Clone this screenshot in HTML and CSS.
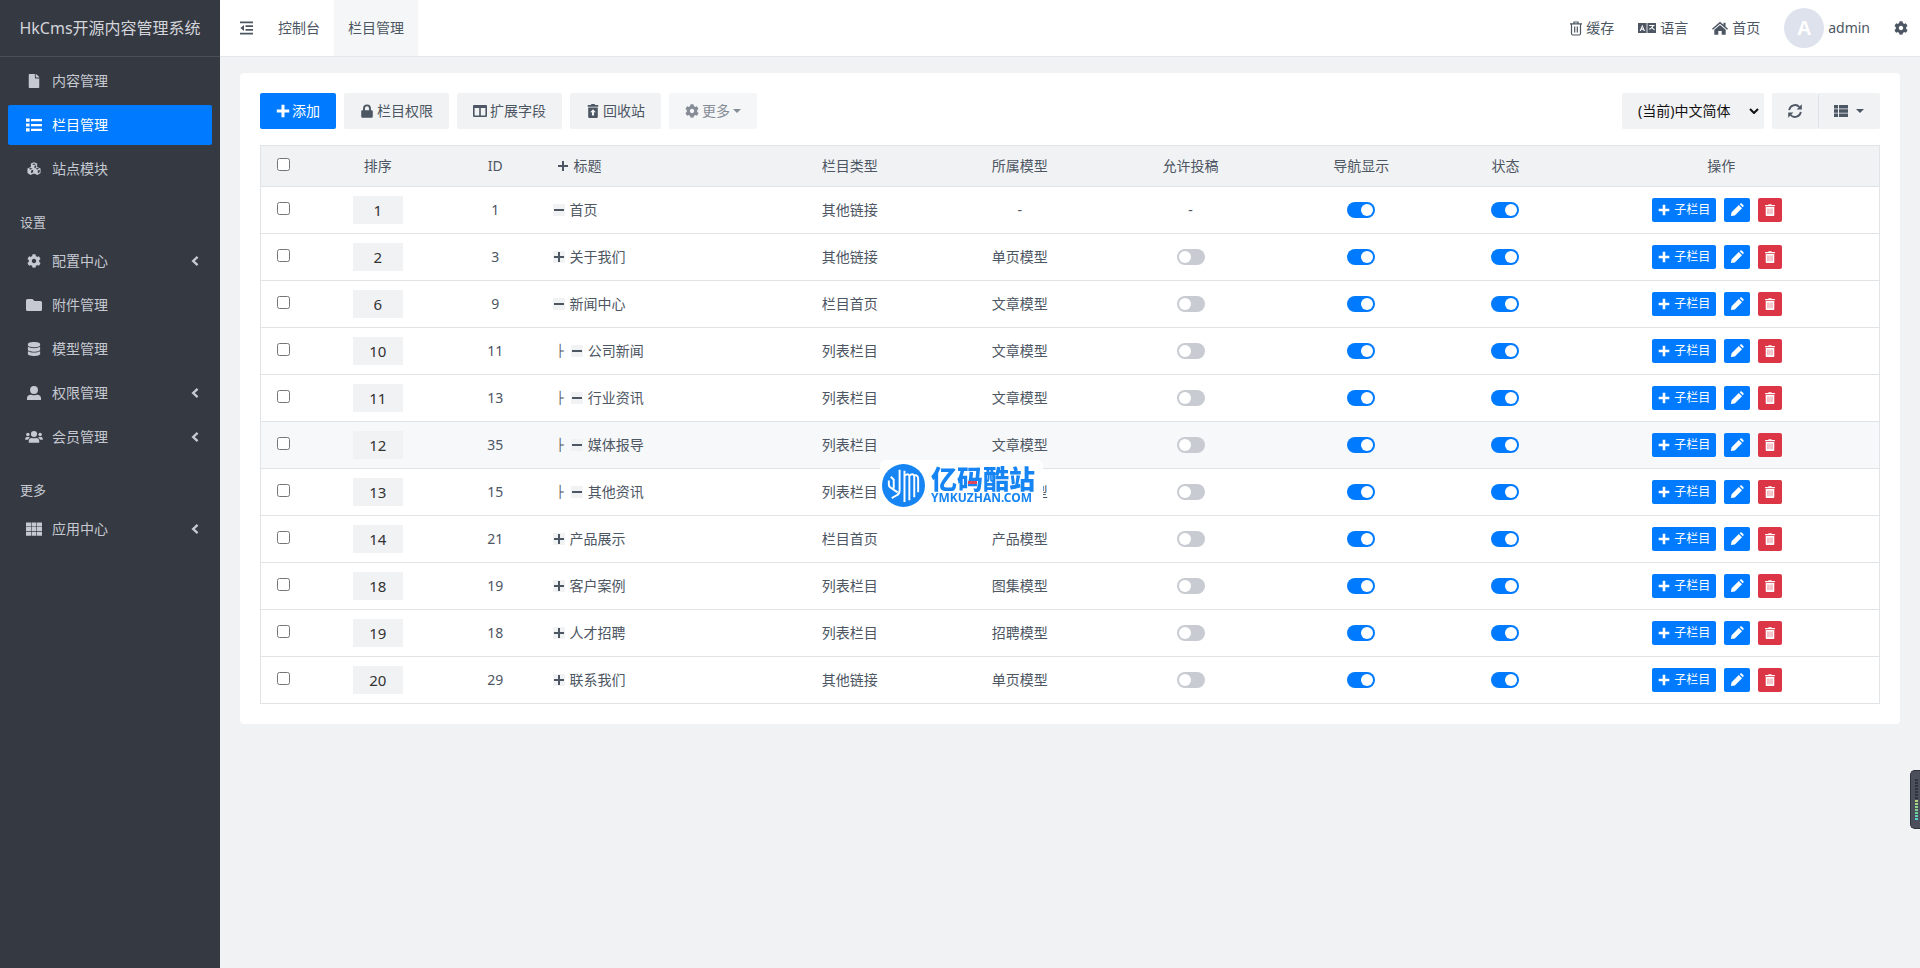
FILE: index.html
```html
<!DOCTYPE html>
<html lang="zh-CN">
<head>
<meta charset="utf-8">
<title>HkCms开源内容管理系统</title>
<link rel="stylesheet" href="styles.css">
</head>
<body>
<svg class="sprite" aria-hidden="true">
  <symbol id="file" viewBox="0 0 384 512"><path d="M224 136V0H24C10.700 0 0 10.700 0 24v464c0 13.300 10.700 24 24 24h336c13.300 0 24-10.700 24-24V160H248c-13.200 0-24-10.800-24-24zm160-14.100v6.100H256V0h6.100c6.400 0 12.500 2.500 17 7l97.900 98c4.500 4.500 7 10.600 7 16.900z"/></symbol>
  <symbol id="list" viewBox="0 0 16 14"><path d="M0 .5h3.600v3.200H0zM5 1h11v2.300H5zM0 5.400h3.600v3.200H0zM5 5.900h11v2.300H5zM0 10.300h3.600v3.200H0zM5 10.800h11v2.300H5z"/></symbol>
  <symbol id="cubes" viewBox="0 0 16 16"><path fill-rule="evenodd" d="M8 .3l3.600 1.400v4l3.900 1.600v5.300L12 14.800 8 13l-4 1.800L.5 12.600V7.300l3.900-1.600v-4zM8 1.600L5.800 2.500 8 3.400l2.200-.9zM8.500 4.500v2.600l2-.9V3.700zM4.200 6.900L2 7.800l2.200.9 2.200-.9zm.5 2.900v3l2.300-1V8.800zm7.100-2.900l-2.200.9 2.200.9 2.200-.9zm.5 2.900v3l2.200-1.200V8.900z"/></symbol>
  <symbol id="gear" viewBox="0 0 512 512"><path d="M487.400 315.700l-42.600-24.600c4.300-23.200 4.300-47 0-70.200l42.600-24.600c4.900-2.800 7.100-8.600 5.500-14-11.100-35.600-30-67.800-54.700-94.600-3.800-4.100-10-5.100-14.800-2.300L380.800 110c-17.900-15.400-38.500-27.300-60.800-35.100V25.800c0-5.600-3.900-10.500-9.400-11.700-36.700-8.200-74.300-7.800-109.200 0-5.500 1.200-9.400 6.100-9.400 11.700V75c-22.200 7.900-42.800 19.800-60.800 35.100L88.700 85.500c-4.900-2.800-11-1.900-14.800 2.300-24.700 26.700-43.600 58.900-54.700 94.600-1.700 5.400.6 11.200 5.500 14L67.300 221c-4.300 23.200-4.300 47 0 70.200l-42.600 24.600c-4.900 2.800-7.100 8.600-5.500 14 11.100 35.600 30 67.800 54.700 94.600 3.800 4.100 10 5.100 14.800 2.300l42.600-24.600c17.900 15.400 38.500 27.300 60.800 35.100v49.200c0 5.600 3.900 10.500 9.400 11.700 36.700 8.200 74.300 7.800 109.200 0 5.500-1.200 9.400-6.100 9.400-11.700v-49.200c22.200-7.900 42.800-19.800 60.800-35.100l42.600 24.600c4.900 2.800 11 1.900 14.800-2.300 24.700-26.700 43.600-58.900 54.700-94.600 1.500-5.500-.7-11.300-5.600-14.100zM256 336c-44.100 0-80-35.900-80-80s35.900-80 80-80 80 35.900 80 80-35.900 80-80 80z"/></symbol>
  <symbol id="folder" viewBox="0 0 16 12"><path d="M1.500 0h5l2 2h6A1.500 1.500 0 0 1 16 3.500v7a1.500 1.500 0 0 1-1.500 1.500h-13A1.500 1.500 0 0 1 0 10.500v-9A1.500 1.500 0 0 1 1.500 0z"/></symbol>
  <symbol id="database" viewBox="0 0 448 512"><path d="M448 73.143v45.714C448 159.143 347.667 192 224 192S0 159.143 0 118.857V73.143C0 32.857 100.333 0 224 0s224 32.857 224 73.143zM448 176v102.857C448 319.143 347.667 352 224 352S0 319.143 0 278.857V176c48.125 33.143 136.208 48.572 224 48.572S399.874 209.143 448 176zm0 160v102.857C448 479.143 347.667 512 224 512S0 479.143 0 438.857V336c48.125 33.143 136.208 48.572 224 48.572S399.874 369.143 448 336z"/></symbol>
  <symbol id="user" viewBox="0 0 16 16"><circle cx="8" cy="4.500" r="4.500"/><path d="M0 16v-2.200c0-2.300 1.900-3.800 4.200-3.800 1 0 1.800.6 3.800.6s2.800-.6 3.800-.6c2.300 0 4.200 1.500 4.200 3.800V16z"/></symbol>
  <symbol id="users" viewBox="0 0 20 16"><circle cx="10" cy="4.500" r="3.500"/><circle cx="3" cy="5" r="2"/><circle cx="17" cy="5" r="2"/><path d="M4 14.500v-2C4 10.300 5.500 9 7.400 9c.6 0 1.300.5 2.600.5s2-.5 2.600-.5c1.900 0 3.400 1.300 3.400 3.500v2zM0 11V9.700C0 8.700.9 8 2 8h2c.6 0 1 .2 1.400.6C4.200 9.200 3.500 10 3.200 11zM20 11V9.700c0-1-.9-1.700-2-1.700h-2c-.6 0-1 .2-1.400.6 1.200.6 1.900 1.400 2.200 2.400z"/></symbol>
  <symbol id="grid" viewBox="0 0 16 14"><path d="M0 .5h5v4H0zM5.600.5h4.800v4H5.600zM11 .5h5v4h-5zM0 5.100h5v4H0zM5.600 5.100h4.800v4H5.600zM11 5.100h5v4h-5zM0 9.700h5v4H0zM5.600 9.700h4.800v4H5.600zM11 9.700h5v4h-5z"/></symbol>
  <symbol id="left" viewBox="0 0 10 12"><path d="M7.600 1.800L3.200 6l4.400 4.200" fill="none" stroke="currentColor" stroke-width="2.400"/></symbol>
  <symbol id="outdent" viewBox="0 0 14 14"><path d="M0 .5h13v1.800H0zM5.500 4.200H13V6H5.500zM5.500 8H13v1.800H5.500zM0 11.700h13v1.800H0zM4 4v6L.4 7z"/></symbol>
  <symbol id="plus" viewBox="0 0 14 14"><path d="M5.500.8h3v4.700h4.700v3H8.500v4.700h-3V8.500H.8v-3h4.700z"/></symbol>
  <symbol id="expand" viewBox="0 0 12 12"><path d="M5 1h2v4h4v2H7v4H5V7H1V5h4z"/></symbol>
  <symbol id="collapse" viewBox="0 0 12 12"><path d="M1 5h10v2H1z"/></symbol>
  <symbol id="lock" viewBox="0 0 14 16"><path fill-rule="evenodd" d="M2.500 7V5a4.500 4.500 0 0 1 9 0v2h.7c.8 0 1.400.6 1.400 1.400v5.900c0 .8-.6 1.400-1.400 1.400H1.800c-.8 0-1.400-.6-1.400-1.400V8.400C.4 7.600 1 7 1.800 7zM4.700 7h4.600V5a2.300 2.300 0 0 0-4.600 0z"/></symbol>
  <symbol id="columns" viewBox="0 0 14 14"><path fill-rule="evenodd" d="M1 1h12a1 1 0 0 1 1 1v10a1 1 0 0 1-1 1H1a1 1 0 0 1-1-1V2a1 1 0 0 1 1-1zM1.600 4v7.400h4.600V4zM7.800 4v7.400h4.600V4z"/></symbol>
  <symbol id="recycle" viewBox="0 0 14 16"><path fill-rule="evenodd" d="M1 1h3.500l.8-1h3.400l.8 1H13v2H1zM1.500 4h11v10.500c0 .9-.6 1.500-1.500 1.500H3c-.9 0-1.500-.6-1.500-1.500zM7 6L3.800 9.400h2v3.600h2.400V9.400h2z"/></symbol>
  <symbol id="trash" viewBox="0 0 12 14"><path fill-rule="evenodd" d="M.3 1.200h3.500L4.400.2h3.200l.6 1h3.500v1.500H.3zM1 3.500h10v9.200c0 .7-.5 1.200-1.200 1.200H2.200c-.7 0-1.200-.5-1.200-1.200zM3.300 5.300v6.700h.7V5.300zM5.700 5.300v6.700h.6V5.300zM8 5.300v6.700h.7V5.300z"/></symbol>
  <symbol id="bin" viewBox="0 0 12 15"><path d="M0 2.800h12M4 2.500V1h4v1.500M1.500 3v9.500c0 1 .6 1.500 1.400 1.500h6.200c.8 0 1.400-.5 1.400-1.500V3M4.700 5.500v6M7.300 5.500v6" fill="none" stroke="currentColor" stroke-width="1.200"/></symbol>
  <symbol id="lang" viewBox="0 0 18 10"><path fill-rule="evenodd" d="M0 0h8.600v10H0zM4.300 1.800L1.600 8h1.200l.5-1.300h2L5.800 8H7zM4.300 3.900l.6 1.700H3.700z"/><path fill-rule="evenodd" d="M9.400 0H18v10H9.400zM11.200 2v1.100h3.100C13.900 4.300 12.800 5.200 11 5.700l.5 1c1-.3 1.800-.8 2.400-1.400.6.700 1.400 1.400 2.300 1.900l.6-1c-.9-.4-1.600-.9-2.100-1.600.4-.5.600-1 .8-1.500h1V2z"/></symbol>
  <symbol id="home" viewBox="0 0 16 14"><path d="M8 .8l3.500 3V1.700h2v3.900L16 7.700l-.9 1.100L8 2.800.9 8.800 0 7.700z"/><path d="M8 4l5.700 4.800v4.400c0 .3-.2.600-.6.600H9.700V9.900H6.300v3.900H2.900c-.4 0-.6-.3-.6-.6V8.800z"/></symbol>
  <symbol id="refresh" viewBox="0 0 14 14"><path d="M1.200 6.200A5.900 5.900 0 0 1 11.400 3M12.800 7.800A5.900 5.900 0 0 1 2.600 11" fill="none" stroke="currentColor" stroke-width="1.800"/><path d="M13.800.3v5.200H8.600zM.2 13.700V8.500h5.200z"/></symbol>
  <symbol id="thlist" viewBox="0 0 14 12"><path d="M0 0h4v3.400H0zM5 0h9v3.400H5zM0 4.300h4v3.400H0zM5 4.300h9v3.400H5zM0 8.600h4V12H0zM5 8.600h9V12H5z"/></symbol>
  <symbol id="pencil" viewBox="0 0 14 14"><path d="M8.800 2l3.200 3.200-7.200 7.200-3.900.7.700-3.900zM9.700 1.200l.6-.5c.5-.5 1.100-.5 1.600 0l1.400 1.400c.5.500.5 1.100 0 1.600l-.5.600z"/></symbol>
</svg>

<aside class="sidebar">
  <h1 class="brand">HkCms开源内容管理系统</h1>
  <nav class="menu">
    <a class="item" href="#"><svg class="icon"><use href="#file"/></svg>内容管理</a>
    <a class="item active" href="#"><svg class="icon"><use href="#list"/></svg>栏目管理</a>
    <a class="item" href="#"><svg class="icon"><use href="#cubes"/></svg>站点模块</a>
    <h2 class="group">设置</h2>
    <a class="item" href="#"><svg class="icon"><use href="#gear"/></svg>配置中心<svg class="arrow"><use href="#left"/></svg></a>
    <a class="item" href="#"><svg class="icon"><use href="#folder"/></svg>附件管理</a>
    <a class="item" href="#"><svg class="icon"><use href="#database"/></svg>模型管理</a>
    <a class="item" href="#"><svg class="icon"><use href="#user"/></svg>权限管理<svg class="arrow"><use href="#left"/></svg></a>
    <a class="item" href="#"><svg class="icon wide"><use href="#users"/></svg>会员管理<svg class="arrow"><use href="#left"/></svg></a>
    <h2 class="group">更多</h2>
    <a class="item" href="#"><svg class="icon"><use href="#grid"/></svg>应用中心<svg class="arrow"><use href="#left"/></svg></a>
  </nav>
</aside>

<div class="page">
  <header class="topbar">
    <button class="fold" type="button" aria-label="折叠菜单"><svg class="i14"><use href="#outdent"/></svg></button>
    <a class="tab" href="#">控制台</a>
    <a class="tab current" href="#">栏目管理</a>
    <div class="tools">
      <a class="tool" href="#"><svg class="i-bin"><use href="#bin"/></svg>缓存</a>
      <a class="tool" href="#"><svg class="i-lang"><use href="#lang"/></svg>语言</a>
      <a class="tool" href="#"><svg class="i-home"><use href="#home"/></svg>首页</a>
      <a class="tool account" href="#"><span class="avatar">A</span>admin</a>
      <button class="fold" type="button" aria-label="设置"><svg class="i14"><use href="#gear"/></svg></button>
    </div>
  </header>

  <main class="card">
    <div class="toolbar">
      <button class="btn primary" type="button"><svg class="i14"><use href="#plus"/></svg>添加</button>
      <button class="btn" type="button"><svg class="i14"><use href="#lock"/></svg>栏目权限</button>
      <button class="btn" type="button"><svg class="i14"><use href="#columns"/></svg>扩展字段</button>
      <button class="btn" type="button"><svg class="i14"><use href="#recycle"/></svg>回收站</button>
      <button class="btn muted" type="button" disabled><svg class="i14"><use href="#gear"/></svg>更多<span class="caret"></span></button>
      <div class="lang-box">
        <select class="lang" aria-label="语言"><option>(当前)中文简体</option></select>
        <svg class="chevron" viewBox="0 0 10 6"><path d="M1 1l4 4 4-4" fill="none" stroke="currentColor" stroke-width="2"/></svg>
      </div>
      <div class="btn-group">
        <button class="btn" type="button" aria-label="刷新"><svg class="i14"><use href="#refresh"/></svg></button>
        <button class="btn cols" type="button" aria-label="列"><svg class="i14"><use href="#thlist"/></svg><span class="caret"></span></button>
      </div>
    </div>

    <table class="grid">
      <colgroup><col class="c-check"><col class="c-sort"><col class="c-id"><col class="c-title"><col class="c-type"><col class="c-model"><col class="c-post"><col class="c-nav"><col class="c-state"><col class="c-ops"></colgroup>
      <thead>
        <tr><th><input class="check" type="checkbox" aria-label="全选"></th><th>排序</th><th>ID</th><th class="title"><span class="node head"><svg class="i12"><use href="#expand"/></svg>标题</span></th><th>栏目类型</th><th>所属模型</th><th>允许投稿</th><th>导航显示</th><th>状态</th><th>操作</th></tr>
      </thead>
      <tbody id="rows"></tbody>
    </table>
  </main>
</div>

<div class="watermark">
  <svg class="mark" viewBox="0 0 44 44"><circle cx="22" cy="22" r="22" fill="#1685f3"/><path d="M7 17v4c0 2 1 3 3 4l6 4M9 13l3 3v9M18 6v21c0 3-1 4-3 5l-5 3M23 39V7M28 37V12M33 34V12M23 12c3-2 4-2 5 0c2-2 4-2 5 0c2-1 4 0 4 3v14" fill="none" stroke="#fff" stroke-width="2"/></svg>
  <div class="words"><span class="name">亿码酷站</span><span class="site">YMKUZHAN.COM</span></div>
</div>
<div class="meter"><span class="bars"></span></div>
<script src="rows.js"></script>
</body>
</html>
```
FILE: styles.css
```css
* { box-sizing: border-box; }
body {
  margin: 0;
  min-height: 100vh;
  display: flex;
  background: #f1f2f4;
  color: #4d5663;
  font: 14px/20px "Noto Sans", "Noto Sans CJK SC", sans-serif;
}
a { color: inherit; text-decoration: none; }
button, select, input { font: inherit; color: inherit; }
button { border: 0; background: none; padding: 0; cursor: pointer; }
svg { flex: none; fill: currentColor; }
.sprite { position: absolute; width: 0; height: 0; }
.i14 { width: 14px; height: 14px; }
.i12 { width: 12px; height: 12px; }

.sidebar { width: 220px; flex: none; background: #353942; color: #c6c9d1; }
.brand {
  margin: 0;
  height: 57px;
  border-bottom: 1px solid #4b4f59;
  display: flex;
  align-items: center;
  justify-content: center;
  font-size: 16px;
  font-weight: 400;
  white-space: nowrap;
  color: #d3d5da;
}
.menu { padding: 4px 8px; display: flex; flex-direction: column; gap: 4px; }
.item { height: 40px; padding: 0 12px 0 18px; display: flex; align-items: center; gap: 10px; border-radius: 2px; }
.item.active { background: #007bff; color: #fff; }
.icon { width: 16px; height: 14px; }
.icon.wide { width: 18px; height: 14px; margin: 0 -1px; }
.arrow { width: 10px; height: 12px; margin-left: auto; }
.group { margin: 0; padding: 19px 12px 5px; font-size: 13px; line-height: 20px; font-weight: 400; }

.page { flex: 1; min-width: 0; }
.topbar {
  height: 57px;
  padding: 0 12px 0 20px;
  display: flex;
  align-items: stretch;
  background: #fff;
  border-bottom: 1px solid #e4e6e9;
}
.fold { display: flex; align-items: center; }
.tab { padding: 0 14px; display: flex; align-items: center; }
.fold + .tab { margin-left: 10px; }
.tab.current { background: #f5f6f8; }
.tools { margin-left: auto; display: flex; align-items: center; gap: 24px; }
.tool { display: flex; align-items: center; gap: 4px; }
.i-bin { width: 12px; height: 15px; }
.i-lang { width: 18px; height: 10px; }
.i-home { width: 16px; height: 14px; }
.avatar {
  width: 40px;
  height: 40px;
  border-radius: 50%;
  background: #dee2ec;
  color: #fff;
  display: grid;
  place-items: center;
  font: 700 20px/20px "Liberation Sans", sans-serif;
}

.card { margin: 16px 20px; padding: 20px; background: #fff; border-radius: 4px; }
.toolbar { display: flex; gap: 8px; margin-bottom: 16px; }
.btn {
  height: 36px;
  padding: 0 16px;
  display: flex;
  align-items: center;
  gap: 3px;
  background: #f1f2f4;
  border-radius: 2px;
  white-space: nowrap;
}
.btn.primary { background: #007bff; color: #fff; gap: 2px; }
.btn.muted { background: #f5f6f8; color: #868c96; }
.caret { border: 4px solid transparent; border-top-color: currentColor; border-bottom: 0; }
.lang-box { margin-left: auto; display: grid; align-items: center; }
.lang-box > * { grid-area: 1 / 1; }
.lang {
  appearance: none;
  width: 142px;
  height: 36px;
  padding: 0 16px;
  border: 0;
  border-radius: 2px;
  background: #f1f2f4;
  color: #111;
}
.chevron { width: 10px; height: 6px; justify-self: end; margin-right: 5px; color: #111; }
.btn-group { display: flex; }
.btn-group .cols { gap: 8px; border-left: 1px solid #e0e3e6; padding-left: 15px; }

.grid {
  width: 100%;
  table-layout: fixed;
  border-collapse: collapse;
  border: 1px solid #e1e4e7;
}
.c-check { width: 2.8%; }
.c-sort { width: 8.9%; }
.c-id { width: 5.6%; }
.c-title { width: 13.9%; }
.c-type { width: 10.4%; }
.c-model { width: 10.6%; }
.c-post { width: 10.5%; }
.c-nav { width: 10.6%; }
.c-state { width: 7.2%; }
.c-ops { width: 19.5%; }
.grid th, .grid td {
  padding: 0 8px;
  text-align: center;
  font-weight: 400;
  border-bottom: 1px solid #e1e4e7;
  vertical-align: middle;
}
.grid th { height: 41px; background: #f1f2f4; }
.grid td { height: 47px; }
.grid .title { text-align: left; }
.hover td { background: #f7f8fa; }
.check { width: 13px; height: 13px; margin: 0 auto 4px; display: block; }
.sort {
  width: 50px;
  height: 28px;
  border: 0;
  padding: 0;
  background: #f1f2f4;
  color: #333;
  text-align: center;
  font-size: 15px;
  display: block;
  margin: 0 auto;
}
.node { display: flex; align-items: center; gap: 5px; padding-left: 4px; }
.node.head { padding-left: 8px; }
.node .i12 { background: #f1f2f4; }
.branch { margin-left: 4px; margin-right: 2px; font: 12px/20px "DejaVu Sans Mono", monospace; }
.switch {
  appearance: none;
  width: 28px;
  height: 16px;
  margin: 0 auto;
  padding: 2px;
  display: flex;
  border-radius: 8px;
  background: #c8cbd2;
}
.switch::before { content: ""; width: 12px; height: 12px; border-radius: 50%; background: #fff; }
.switch:checked { background: #007bff; justify-content: flex-end; }
.ops { display: flex; justify-content: center; gap: 8px; padding-right: 8px; }
.small {
  height: 24px;
  padding: 0 6px;
  display: flex;
  align-items: center;
  gap: 4px;
  border-radius: 2px;
  background: #007bff;
  color: #fff;
  font-size: 12px;
  white-space: nowrap;
}
.small.danger { background: #dc3545; }

.watermark {
  position: fixed;
  left: 880px;
  top: 460px;
  height: 50px;
  padding: 0 8px 0 2px;
  display: flex;
  align-items: center;
  gap: 6px;
  background: #fff;
  border-radius: 6px;
  color: #1685f3;
}
.mark { width: 43px; height: 43px; }
.words { display: flex; flex-direction: column; width: 104px; }
.name { position: relative; font: 900 26px/26px "Noto Sans CJK SC", sans-serif; white-space: nowrap; }
.name::after {
  content: "";
  position: absolute;
  left: 37px;
  top: 16px;
  width: 9px;
  height: 3px;
  background: #e0455c;
}
.site { font: 700 12px/14px "Noto Sans", sans-serif; white-space: nowrap; }
.meter {
  position: fixed;
  right: 0;
  top: 770px;
  width: 10px;
  height: 59px;
  padding: 7px 2px 7px 4px;
  background: #4b4f5b;
  border: 1px solid #2f323b;
  border-right: 0;
  border-radius: 5px 0 0 5px;
}
.bars {
  display: block;
  height: 100%;
  background: repeating-linear-gradient(#4b4f5b 0 1px, transparent 1px 3px), linear-gradient(#30333c 0 52%, #b5d67a 52%, #6fcf9a 80%, #4fd0d8);
}
```
FILE: rows.js
```js
const rows = [
  [1, 1, 0, "-", "首页", "其他链接", "-"],
  [2, 3, 0, "+", "关于我们", "其他链接", "单页模型"],
  [6, 9, 0, "-", "新闻中心", "栏目首页", "文章模型"],
  [10, 11, 1, "-", "公司新闻", "列表栏目", "文章模型"],
  [11, 13, 1, "-", "行业资讯", "列表栏目", "文章模型"],
  [12, 35, 1, "-", "媒体报导", "列表栏目", "文章模型"],
  [13, 15, 1, "-", "其他资讯", "列表栏目", "文章模型"],
  [14, 21, 0, "+", "产品展示", "栏目首页", "产品模型"],
  [18, 19, 0, "+", "客户案例", "列表栏目", "图集模型"],
  [19, 18, 0, "+", "人才招聘", "列表栏目", "招聘模型"],
  [20, 29, 0, "+", "联系我们", "其他链接", "单页模型"]
];
const toggle = (label, on) => `<input class="switch" type="checkbox" aria-label="${label}"${on ? " checked" : ""}>`;
document.getElementById("rows").innerHTML = rows.map(([sort, id, level, mark, name, type, model]) => `
  <tr${id === 35 ? ' class="hover"' : ""}>
    <td><input class="check" type="checkbox" aria-label="选择 ${name}"></td>
    <td><input class="sort" type="text" value="${sort}" aria-label="排序"></td>
    <td>${id}</td>
    <td class="title"><span class="node">${level ? '<span class="branch">├</span>' : ""}<svg class="i12"><use href="#${mark === "+" ? "expand" : "collapse"}"/></svg>${name}</span></td>
    <td>${type}</td>
    <td>${model}</td>
    <td>${model === "-" ? "-" : toggle("允许投稿", false)}</td>
    <td>${toggle("导航显示", true)}</td>
    <td>${toggle("状态", true)}</td>
    <td><div class="ops">
      <button class="small" type="button"><svg class="i12"><use href="#plus"/></svg>子栏目</button>
      <button class="small" type="button" aria-label="编辑"><svg class="i14"><use href="#pencil"/></svg></button>
      <button class="small danger" type="button" aria-label="删除"><svg class="i12"><use href="#trash"/></svg></button>
    </div></td>
  </tr>`).join("");
```
